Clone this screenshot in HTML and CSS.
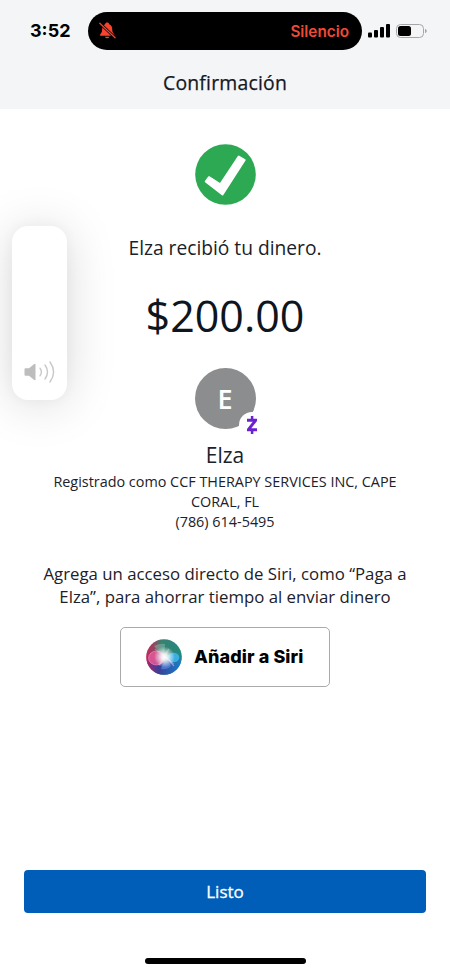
FILE: index.html
```
<!DOCTYPE html>
<html lang="es">
<head>
<meta charset="utf-8">
<meta name="viewport" content="width=device-width, initial-scale=1">
<title>Confirmación</title>
<link rel="stylesheet" href="styles.css">
</head>
<body>
<div class="screen">
  <header class="header">
    <div class="status">
      <span class="time">3:52</span>
      <div class="island">
        <svg class="bell" width="17" height="18" viewBox="0 0 17 18">
          <path d="M8.2.6c-1.100 0-1.900.7-2 1.600C4 3 3.200 4.900 3.200 7c0 3.200-.9 4-1.900 5.200-.6.8-.2 1.500.7 1.500h12.400c.9 0 1.300-.7.7-1.500-1-1.200-1.900-2-1.900-5.200 0-2.100-.8-4-3-4.800C10.100 1.300 9.300.6 8.200.6zM5.900 14.700a2.400 2.200 0 0 0 4.600 0z" fill="#f8432e"/>
          <path d="M.8 1.200l15.300 14.600" stroke="#000" stroke-width="2.800"/>
          <path d="M.8 1.200l15.300 14.600" stroke="#f8432e" stroke-width="1.200" stroke-linecap="round"/>
        </svg>
        <span class="silent">Silencio</span>
      </div>
      <svg class="signal" width="22" height="14" viewBox="0 0 22 14">
        <rect x="0" y="8.500" width="4" height="5" rx="1"/><rect x="6" y="6" width="4" height="7.500" rx="1"/><rect x="12" y="3" width="4" height="10.500" rx="1"/><rect x="18" y="0" width="4" height="13.500" rx="1"/>
      </svg>
      <svg class="battery" width="31" height="14" viewBox="0 0 31 14">
        <rect x=".5" y=".5" width="27" height="13" rx="4" fill="none" stroke="#a5a6a9"/>
        <rect x="2" y="2" width="13" height="10" rx="2.500"/>
        <path d="M29 4.800q1.800.7 1.800 2.200T29 9.200z" fill="#a5a6a9"/>
      </svg>
    </div>
    <h1 class="title">Confirmación</h1>
  </header>

  <main class="content">
    <svg class="check" width="61" height="61" viewBox="0 0 61 61">
      <circle cx="30.500" cy="30.500" r="30.300" fill="#2da853"/>
      <path d="M10.700 37.500L14 33.200 25.300 40.300 43.700 12.500 49.700 16 27.500 50.400z" fill="#fff" stroke="#fff" stroke-width="2" stroke-linejoin="round"/>
    </svg>
    <p class="received"><span>Elza recibió tu dinero.</span></p>
    <p class="amount"><span>$200.00</span></p>
    <div class="avatar">
      <span class="initial">E</span>
      <span class="badge">
        <svg width="12" height="20" viewBox="0 0 12 20" fill="none" stroke="#6b21d0">
          <path d="M1 3.700h10v2.400L5.300 13.300H11v3H1v-2.400L6.700 6.700H1z" fill="#6b21d0" stroke="none"/>
          <path d="M6.100 1v4M6.100 15v4" stroke-width="2.500"/>
        </svg>
      </span>
    </div>
    <h2 class="name"><span>Elza</span></h2>
    <p class="details"><span>Registrado como CCF THERAPY SERVICES INC, CAPE</span><br><span>CORAL, FL</span><br><span>(786) 614-5495</span></p>
    <p class="hint"><span>Agrega un acceso directo de Siri, como “Paga a</span><br><span>Elza”, para ahorrar tiempo al enviar dinero</span></p>
    <button class="siri">
      <svg width="36" height="36" viewBox="0 0 36 36">
        <defs>
          <linearGradient id="top" x1="0" y1="0.200" x2="1" y2="0.200"><stop offset="0" stop-color="#c4265f"/><stop offset=".22" stop-color="#96445f"/><stop offset=".42" stop-color="#3b8070"/><stop offset="1" stop-color="#1f8a80"/></linearGradient>
          <linearGradient id="low" x1="0" y1="0" x2="1" y2="0"><stop offset="0" stop-color="#b0236b"/><stop offset=".35" stop-color="#3b3f95"/><stop offset="1" stop-color="#1680cf"/></linearGradient>
          <linearGradient id="fade" x1="0" y1="0" x2="0" y2="1"><stop offset=".45" stop-color="#000"/><stop offset=".7" stop-color="#fff"/></linearGradient>
          <mask id="lower"><rect width="36" height="36" fill="url(#fade)"/></mask>
          <radialGradient id="glow"><stop offset="0" stop-color="#fff"/><stop offset=".3" stop-color="#fff" stop-opacity=".85"/><stop offset="1" stop-color="#fff" stop-opacity="0"/></radialGradient>
          <clipPath id="orb"><circle cx="18" cy="18" r="17.800"/></clipPath>
        </defs>
        <g clip-path="url(#orb)">
          <rect width="36" height="36" fill="url(#top)"/>
          <rect width="36" height="36" fill="url(#low)" mask="url(#lower)"/>
          <path d="M18 18L8 7q6-3 11-2z" fill="#a9d8cb" fill-opacity=".35"/>
          <path d="M20 17l-5 13q6 1 10-3z" fill="#6fa5f0" fill-opacity=".45"/>
          <ellipse cx="10.500" cy="19" rx="8" ry="7" fill="#e95a9e" fill-opacity=".8" stroke="#ffa9cc" stroke-opacity=".6" stroke-width=".8"/>
          <ellipse cx="27.500" cy="18.500" rx="5.800" ry="4.800" fill="#3fb2ea" fill-opacity=".9"/>
          <path d="M20 18l8 9" stroke="#dfb4e4" stroke-opacity=".6" stroke-width="1.200"/>
          <circle cx="18.500" cy="18" r="10.500" fill="url(#glow)"/>
          <path d="M9 10l19 15M23 10L13 26" stroke="#fff" stroke-opacity=".25" stroke-width="1.500"/>
        </g>
      </svg>
      <span class="siri-label">Añadir a Siri</span>
    </button>
    <button class="done"><span>Listo</span></button>
    <div class="home"></div>
  </main>

  <div class="volume">
    <svg width="31" height="24" viewBox="0 0 31 24" fill="none" stroke="#c8c8c8" stroke-width="1.400" stroke-linecap="round">
      <path d="M1.500 8.200H5L10.300 4q1.200-.8 1.200.6v14.800q0 1.400-1.200.6L5 15.800H1.500Q.5 15.800.5 14.800V9.200q0-1 1-1z" fill="#bdbdbd" stroke="none"/>
      <path d="M16 8.200q2.800 3.800 0 7.600M21 5q5 7 0 14M26 2q7.200 10 0 20"/>
    </svg>
  </div>
</div>
</body>
</html>
```
FILE: styles.css
```
* { box-sizing: border-box; margin: 0; padding: 0; }

body {
  background: #fff;
  color: #1b2129;
  font-family: "Open Sans", "Noto Sans", sans-serif;
}

.screen {
  position: relative;
  width: 450px;
  height: 974px;
  overflow: hidden;
  display: flex;
  flex-direction: column;
}

.header { height: 109px; background: #f4f5f7; padding-top: 12px; }

.status { display: flex; align-items: center; height: 38px; }
.time {
  width: 88px;
  padding-left: 30px;
  font: 700 18px/38px Inter, sans-serif;
  color: #000;
}
.island {
  width: 274px;
  height: 38px;
  padding: 0 13px 0 11px;
  border-radius: 19px;
  background: #000;
  display: flex;
  align-items: center;
  justify-content: space-between;
}
.silent { padding-top: 1px; font: 600 15.3px/38px Inter, sans-serif; color: #f04a37; }
.signal { margin-left: 6px; }
.battery { margin-left: 6px; }

.title {
  margin-top: 18px;
  font-size: 19.4px;
  line-height: 29px;
  font-weight: 400;
  letter-spacing: .2px;
  -webkit-text-stroke: .25px currentColor;
  text-align: center;
  color: #15191f;
}

.content {
  flex: 1;
  display: flex;
  flex-direction: column;
  align-items: center;
  padding-top: 35px;
  text-align: center;
  white-space: nowrap;
}
.check { flex: none; }
.received { margin-top: 28px; font-size: 19.2px; line-height: 30px; }
.amount { margin-top: 23px; font-size: 43px; line-height: 60px; color: #0e151e; }

.avatar {
  position: relative;
  flex: none;
  width: 61px;
  height: 61px;
  margin-top: 22px;
  border-radius: 50%;
  background: #8c8d8f;
}
.initial { color: #fff; font-size: 27px; font-weight: 600; line-height: 61px; }
.badge {
  position: absolute;
  left: 44px;
  top: 44px;
  width: 26px;
  height: 26px;
  border-radius: 50%;
  background: #fff;
  display: flex;
  align-items: center;
  justify-content: center;
}

.name { margin-top: 11px; font-size: 21px; line-height: 30px; font-weight: 400; }
.details { margin-top: 2px; font-size: 14.4px; line-height: 20px; }
.hint { margin-top: 30px; font-size: 16.8px; line-height: 23px; }

button { border: 0; cursor: pointer; }
.siri {
  width: 210px;
  height: 60px;
  margin-top: 19px;
  border: 1px solid #aaa;
  border-radius: 5px;
  background: #fff;
  display: flex;
  flex: none;
  align-items: center;
  padding-left: 25px;
  gap: 12px;
}
.siri-label { font: 800 18px/24px Inter, sans-serif; letter-spacing: .1px; color: #000; }

.done {
  flex: none;
  width: 402px;
  height: 43px;
  margin-top: 183px;
  border-radius: 4px;
  background: #005eb8;
  color: #fff;
  font: 400 17px/43px "Open Sans", sans-serif;
  -webkit-text-stroke: .3px currentColor;
}
.home { flex: none; width: 161px; height: 6px; margin-top: 45px; border-radius: 3px; background: #000; }

.volume {
  position: absolute;
  left: 12px;
  top: 226px;
  width: 55px;
  height: 174px;
  border-radius: 16px;
  background: #fff;
  box-shadow: 0 4px 50px rgba(0, 0, 0, .15), 0 0 14px rgba(0, 0, 0, .04);
  display: flex;
  align-items: flex-end;
  justify-content: center;
  padding-bottom: 16px;
}
```
